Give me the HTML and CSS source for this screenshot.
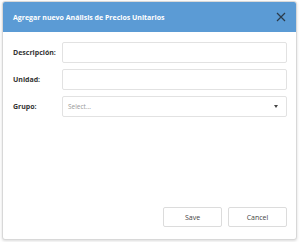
FILE: index.html
```html
<!DOCTYPE html>
<html lang="es">
<head>
    <meta charset="UTF-8">
    <title>Agregar nuevo Análisis de Precios Unitarios</title>
    <link rel="stylesheet" href="styles.css">
</head>
<body>
    <div class="dialog">
        <div class="dialog-header">
            <span class="dialog-title">Agregar nuevo Análisis de Precios Unitarios</span>
            <svg class="close" width="10" height="10" viewBox="0 0 10 10">
                <path d="M1 1 L9 9 M9 1 L1 9" stroke="#2b3a4a" stroke-width="1.2" fill="none"/>
            </svg>
        </div>
        <div class="dialog-body">
            <div class="form-row">
                <label>Descripción:</label>
                <div class="field"></div>
            </div>
            <div class="form-row">
                <label>Unidad:</label>
                <div class="field"></div>
            </div>
            <div class="form-row">
                <label>Grupo:</label>
                <div class="field select">
                    <span class="placeholder">Select...</span>
                    <span class="caret"></span>
                </div>
            </div>
        </div>
        <div class="dialog-footer">
            <button>Save</button>
            <button>Cancel</button>
        </div>
    </div>
</body>
</html>
```

FILE: styles.css
```css
body {
    margin: 0;
    padding: 1px 3px 2px 2px;
    font-family: "Open Sans", "Noto Sans", sans-serif;
    background: #ffffff;
}

.dialog {
    height: 239px;
    box-sizing: border-box;
    border: 1px solid #d8d8d8;
    border-radius: 3px;
    box-shadow: 0 1px 3px rgba(0, 0, 0, 0.15);
    display: flex;
    flex-direction: column;
    background: #fff;
}

.dialog-header {
    height: 30px;
    background-color: #5b9bd5;
    border-radius: 2px 2px 0 0;
    display: flex;
    align-items: center;
    justify-content: space-between;
    padding: 0 10px 0 10px;
}

.dialog-title {
    color: #fff;
    font-size: 7px;
    font-weight: bold;
}

.dialog-body {
    flex: 1;
    padding: 10px 9px 0 10px;
}

.form-row {
    display: flex;
    align-items: center;
    margin-bottom: 6px;
}

label {
    width: 49px;
    font-size: 7px;
    font-weight: bold;
    color: #333;
}

.field {
    flex: 1;
    height: 21px;
    box-sizing: border-box;
    border: 1px solid #e2e2e2;
    border-radius: 2px;
}

.select {
    display: flex;
    align-items: center;
    justify-content: space-between;
    padding: 0 8px 0 5px;
}

.placeholder {
    font-size: 6.5px;
    color: #999;
}

.caret {
    width: 0;
    height: 0;
    border-left: 2.5px solid transparent;
    border-right: 2.5px solid transparent;
    border-top: 3px solid #444;
}

.dialog-footer {
    display: flex;
    justify-content: flex-end;
    gap: 6px;
    padding: 0 9px 12px 0;
}

button {
    width: 59px;
    height: 20px;
    background: #fff;
    border: 1px solid #dcdcdc;
    border-radius: 2px;
    font-family: "Open Sans", "Noto Sans", sans-serif;
    font-size: 7px;
    color: #444;
}
```
